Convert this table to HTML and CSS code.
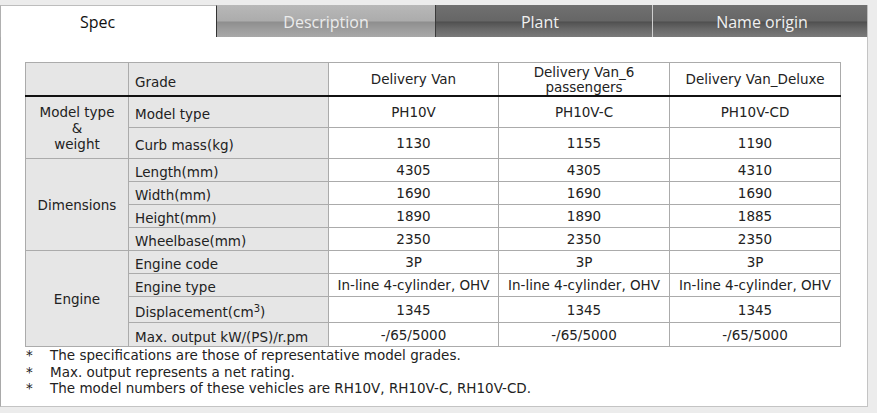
FILE: index.html
```html
<!DOCTYPE html>
<html lang="en">
<head>
<meta charset="utf-8">
<title>Spec</title>
<link rel="stylesheet" href="styles.css">
</head>
<body>
<div class="wrap">
  <div class="tabs">
    <div class="tab tab-active">Spec</div>
    <div class="tab tab-light">Description</div>
    <div class="tab tab-dark">Plant</div>
    <div class="tab tab-dark tab-last">Name origin</div>
  </div>
  <div class="panel">
    <table class="spec">
      <colgroup>
        <col class="c1"><col class="c2"><col class="c3"><col class="c4"><col class="c5">
      </colgroup>
      <tr class="r-head">
        <th class="grey"></th>
        <th class="grey label head-label">Grade</th>
        <th>Delivery Van</th>
        <th class="two">Delivery Van_6<br>passengers</th>
        <th>Delivery Van_Deluxe</th>
      </tr>
      <tr class="r-big">
        <td class="grey group" rowspan="2">Model type<br>&amp;<br>weight</td>
        <td class="grey label">Model type</td>
        <td>PH10V</td><td>PH10V-C</td><td>PH10V-CD</td>
      </tr>
      <tr class="r-big">
        <td class="grey label">Curb mass(kg)</td>
        <td>1130</td><td>1155</td><td>1190</td>
      </tr>
      <tr class="r-sm">
        <td class="grey group" rowspan="4">Dimensions</td>
        <td class="grey label">Length(mm)</td>
        <td>4305</td><td>4305</td><td>4310</td>
      </tr>
      <tr class="r-sm">
        <td class="grey label">Width(mm)</td>
        <td>1690</td><td>1690</td><td>1690</td>
      </tr>
      <tr class="r-sm">
        <td class="grey label">Height(mm)</td>
        <td>1890</td><td>1890</td><td>1885</td>
      </tr>
      <tr class="r-sm">
        <td class="grey label">Wheelbase(mm)</td>
        <td>2350</td><td>2350</td><td>2350</td>
      </tr>
      <tr class="r-sm">
        <td class="grey group" rowspan="4">Engine</td>
        <td class="grey label">Engine code</td>
        <td>3P</td><td>3P</td><td>3P</td>
      </tr>
      <tr class="r-sm">
        <td class="grey label">Engine type</td>
        <td>In-line 4-cylinder, OHV</td><td>In-line 4-cylinder, OHV</td><td>In-line 4-cylinder, OHV</td>
      </tr>
      <tr class="r-disp">
        <td class="grey label">Displacement(cm<sup>3</sup>)</td>
        <td>1345</td><td>1345</td><td>1345</td>
      </tr>
      <tr class="r-max">
        <td class="grey label">Max. output kW/(PS)/r.pm</td>
        <td>-/65/5000</td><td>-/65/5000</td><td>-/65/5000</td>
      </tr>
    </table>
    <ul class="notes">
      <li><span class="ast">*</span><span>The specifications are those of representative model grades.</span></li>
      <li><span class="ast">*</span><span>Max. output represents a net rating.</span></li>
      <li><span class="ast">*</span><span>The model numbers of these vehicles are RH10V, RH10V-C, RH10V-CD.</span></li>
    </ul>
  </div>
</div>
</body>
</html>
```
FILE: styles.css
```css
html, body {
  margin: 0;
  padding: 0;
  background: #ececec;
}
body {
  font-family: "DejaVu Sans", Verdana, sans-serif;
  font-size: 13.5px;
  color: #222;
}
.wrap {
  width: 868px;
  padding-top: 5px;
}
.tabs {
  display: flex;
  height: 32px;
}
.tab {
  height: 32px;
  line-height: 34px;
  text-align: center;
  font-family: "Open Sans", "Noto Sans", sans-serif;
  font-size: 16px;
  box-sizing: border-box;
}
.tab-active {
  width: 217px;
  background: #fff;
  color: #111;
  border-top: 1px solid #bdbdbd;
  border-left: 1px solid #b0b0b0;
  border-right: 1px solid #333;
  line-height: 33px;
  padding-right: 22px;
}
.tab-light {
  width: 219px;
  color: #ececec;
  background: linear-gradient(to bottom, #b8b8b8 0px, #acacac 16px, #8e8e8e 17px, #909090 18px, #9c9c9c 24px, #a8a8a8 32px);
  border-right: 1px solid #3a3a3a;
}
.tab-dark {
  width: 217px;
  color: #f0f0f0;
  background: linear-gradient(to bottom, #707070 0px, #666 16px, #4e4e4e 17px, #545454 18px, #686868 24px, #7a7a7a 32px);
  border-right: 1px solid #cfcfcf;
  padding-right: 8px;
}
.tab-last {
  width: 215px;
  border-right: 1px solid #bdbdbd;
  padding-right: 0;
  padding-left: 4px;
}
.panel {
  background: #fff;
  border-left: 1px solid #a9a9a9;
  border-right: 1px solid #c4c4c4;
  border-bottom: 1px solid #c4c4c4;
  padding: 25px 0 0 24px;
  height: 344px;
  box-sizing: content-box;
  width: 842px;
}
.spec {
  border-collapse: collapse;
  table-layout: fixed;
  width: 816px;
}
.c1 { width: 103px; }
.c2 { width: 200px; }
.c3 { width: 170px; }
.c4 { width: 171px; }
.c5 { width: 171px; }
.spec th, .spec td {
  border: 1px solid #ababab;
  text-align: center;
  font-weight: normal;
  padding: 0 4px;
  vertical-align: middle;
  line-height: 16px;
  white-space: nowrap;
}
.spec .grey {
  background: #e6e6e6;
}
.spec .label {
  text-align: left;
  padding: 4px 6px 0 6px;
}
.spec .head-label {
  padding-top: 6px;
}
.spec .two {
  line-height: 15px;
  padding-top: 1px;
}
.r-head th {
  height: 32px;
  border-bottom: 2px solid #111;
}
.r-head th.head-label { height: 26px; }
.r-head th.two { height: 31px; }
.r-big td { height: 30px; }
.r-big td.label { height: 26px; }
.r-sm td { height: 22px; }
.r-sm td.label { height: 18px; }
.r-disp td { height: 25px; }
.r-disp td.label { height: 21px; }
.r-max td { height: 23px; }
.r-max td.label { height: 19px; }
.spec td.group { height: auto; padding: 0 4px; }
sup {
  font-size: 10px;
  line-height: 0;
}
.notes {
  list-style: none;
  margin: 0;
  padding: 0;
}
.notes li {
  display: flex;
  line-height: 16.5px;
}
.ast {
  width: 24px;
  padding-left: 1px;
}
```
